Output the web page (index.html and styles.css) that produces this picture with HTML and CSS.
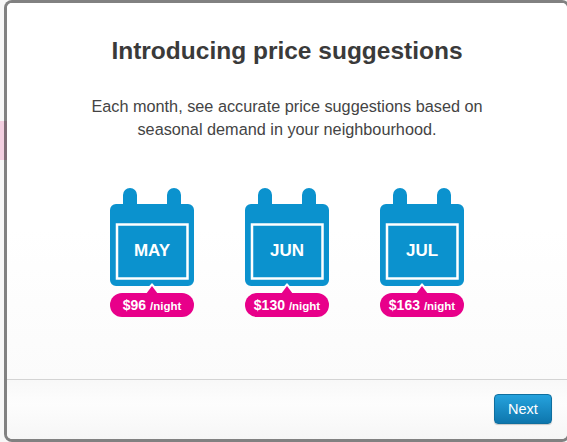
FILE: index.html
```html
<!DOCTYPE html>
<html lang="en">
<head>
<meta charset="utf-8">
<title>Introducing price suggestions</title>
<link rel="stylesheet" href="styles.css">
</head>
<body>
<div class="backdrop-chip"></div>
<div class="modal">
  <div class="modal-body">
    <h1 class="title">Introducing price suggestions</h1>
    <p class="lead">Each month, see accurate price suggestions based on<br>seasonal demand in your neighbourhood.</p>
    <div class="months">
      <div class="month">
        <svg class="calendar" width="84" height="98" viewBox="0 0 84 98"><path class="cal-fill" d="M13 16V7a7 7 0 0 1 14 0v9h30V7a7 7 0 0 1 14 0v9h7a6 6 0 0 1 6 6v70a6 6 0 0 1-6 6H6a6 6 0 0 1-6-6V22a6 6 0 0 1 6-6z"/><rect class="cal-frame" x="7" y="36.5" width="70.5" height="54"/></svg>
        <span class="month-name">MAY</span>
        <div class="price"><b>$96</b> <span>/night</span></div>
      </div>
      <div class="month">
        <svg class="calendar" width="84" height="98" viewBox="0 0 84 98"><path class="cal-fill" d="M13 16V7a7 7 0 0 1 14 0v9h30V7a7 7 0 0 1 14 0v9h7a6 6 0 0 1 6 6v70a6 6 0 0 1-6 6H6a6 6 0 0 1-6-6V22a6 6 0 0 1 6-6z"/><rect class="cal-frame" x="7" y="36.5" width="70.5" height="54"/></svg>
        <span class="month-name">JUN</span>
        <div class="price"><b>$130</b> <span>/night</span></div>
      </div>
      <div class="month">
        <svg class="calendar" width="84" height="98" viewBox="0 0 84 98"><path class="cal-fill" d="M13 16V7a7 7 0 0 1 14 0v9h30V7a7 7 0 0 1 14 0v9h7a6 6 0 0 1 6 6v70a6 6 0 0 1-6 6H6a6 6 0 0 1-6-6V22a6 6 0 0 1 6-6z"/><rect class="cal-frame" x="7" y="36.5" width="70.5" height="54"/></svg>
        <span class="month-name">JUL</span>
        <div class="price"><b>$163</b> <span>/night</span></div>
      </div>
    </div>
  </div>
  <div class="modal-footer">
    <button class="next" type="button">Next</button>
  </div>
</div>
</body>
</html>
```
FILE: styles.css
```css
html, body {
  margin: 0;
  padding: 0;
  height: 100%;
  overflow: hidden;
  background: #f7f7f7;
}
body {
  position: relative;
  font-family: "Liberation Sans", Arial, sans-serif;
}
.backdrop-chip {
  position: absolute;
  left: 0;
  top: 121px;
  width: 7px;
  height: 39px;
  background: #f3cfe0;
}
.modal {
  position: absolute;
  left: 4px;
  top: 0;
  width: 560px;
  height: 436px;
  border: 3px solid rgba(0, 0, 0, .48);
  border-radius: 8px;
  background: #fff;
  background-clip: padding-box;
  display: flex;
  flex-direction: column;
}
.modal-body {
  height: 376px;
  box-sizing: border-box;
  padding-top: 33px;
  text-align: center;
  background: linear-gradient(#fff 0, #fff 60%, #fbfbfb 100%);
  border-radius: 5px 5px 0 0;
}
.title {
  margin: 0;
  font-size: 24.5px;
  line-height: 30px;
  font-weight: 700;
  color: #3a3a3a;
}
.lead {
  margin: 29px 0 0;
  font-size: 16.25px;
  line-height: 23px;
  color: #444;
}
.months {
  display: flex;
  justify-content: center;
  gap: 51px;
  margin-top: 47px;
}
.month {
  position: relative;
  width: 84px;
}
.calendar {
  display: block;
}
.cal-fill { fill: #0b92ce; }
.cal-frame { fill: none; stroke: #fff; stroke-width: 2.5; }
.month-name {
  position: absolute;
  left: 0;
  right: 0;
  top: 53px;
  font-size: 17px;
  line-height: 20px;
  font-weight: 700;
  color: #fff;
  text-align: center;
}
.price {
  position: relative;
  margin-top: 7px;
  height: 24px;
  border-radius: 12px;
  background: #e8008a;
  color: #fff;
  text-align: center;
  font-size: 14px;
  line-height: 24px;
  white-space: nowrap;
}
/* white halo that bites into the calendar's lower edge */
.price::after {
  content: "";
  position: absolute;
  left: 33px;
  top: -10px;
  width: 18px;
  height: 10px;
  background: #fff;
  clip-path: polygon(50% 0, 100% 100%, 0 100%);
}
/* pink pointer */
.price::before {
  content: "";
  position: absolute;
  left: 36px;
  top: -7px;
  width: 12px;
  height: 8px;
  background: #e8008a;
  clip-path: polygon(50% 0, 100% 100%, 0 100%);
  z-index: 1;
}
.price b { font-weight: 700; }
.price span { font-size: 11.5px; font-weight: 700; }
.modal-footer {
  flex: 1;
  border-top: 1px solid #d4d4d4;
  background: linear-gradient(#f8f8f8, #fdfdfd 40%, #f6f6f6);
  display: flex;
  justify-content: flex-end;
  align-items: flex-start;
  padding: 14px 15px 0 0;
  border-radius: 0 0 5px 5px;
}
.next {
  width: 58px;
  height: 30px;
  padding: 0;
  border: 1px solid #0f6f9f;
  border-radius: 4px;
  background: linear-gradient(#25a2dd, #0e76ad);
  color: #fff;
  font-family: "Liberation Sans", Arial, sans-serif;
  font-size: 14.5px;
  box-shadow: 0 1px 1px rgba(0,0,0,.2);
}
```
